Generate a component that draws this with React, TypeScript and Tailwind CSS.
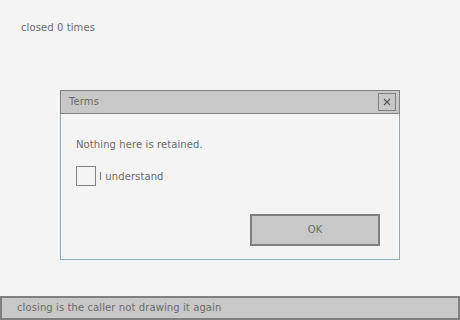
import React, { useState } from "react";

export default function App() {
  const [checked, setChecked] = useState(false);
  return (
    <div
      className="w-[460px] h-[320px] bg-[#f4f4f4] flex flex-col text-[#6b6b6b] text-[10px] leading-[12px] tracking-[0.1px]"
      style={{ fontFamily: '"DejaVu Sans", Verdana, sans-serif' }}
    >
      <div className="pl-[21px] pt-[22px] h-[90px]">closed 0 times</div>
      <div className="ml-[60px] w-[340px] h-[170px] border border-[#8fabbb] bg-[#f4f4f4] flex flex-col">
        <div className="-mx-px -mt-px h-[24px] bg-[#c8c8c8] border border-[#808080] flex items-center justify-between pl-[8px] pr-[3px]">
          <span>Terms</span>
          <button className="w-[18px] h-[18px] border border-[#808080] flex items-center justify-center">
            <svg width="8" height="8" viewBox="0 0 8 8" stroke="#555" strokeWidth="1.1">
              <path d="M1 1 L7 7 M7 1 L1 7" />
            </svg>
          </button>
        </div>
        <div className="pl-[15px] pr-[19px] pt-[25px] flex flex-col flex-1">
          <div>Nothing here is retained.</div>
          <label className="mt-[15px] flex items-center gap-[3px]">
            <span
              onClick={() => setChecked(!checked)}
              className="w-[20px] h-[20px] border border-[#808080] bg-[#f4f4f4]"
            />
            <span className="pt-px">I understand</span>
          </label>
          <div className="flex justify-end mt-[28px]">
            <button className="w-[130px] h-[32px] bg-[#c8c8c8] border-2 border-[#808080] text-[#6b6b6b] text-[10px]">
              OK
            </button>
          </div>
        </div>
      </div>
      <div className="mt-auto h-[24px] bg-[#c8c8c8] border-2 border-[#808080] flex items-center pl-[15px]">
        closing is the caller not drawing it again
      </div>
    </div>
  );
}
